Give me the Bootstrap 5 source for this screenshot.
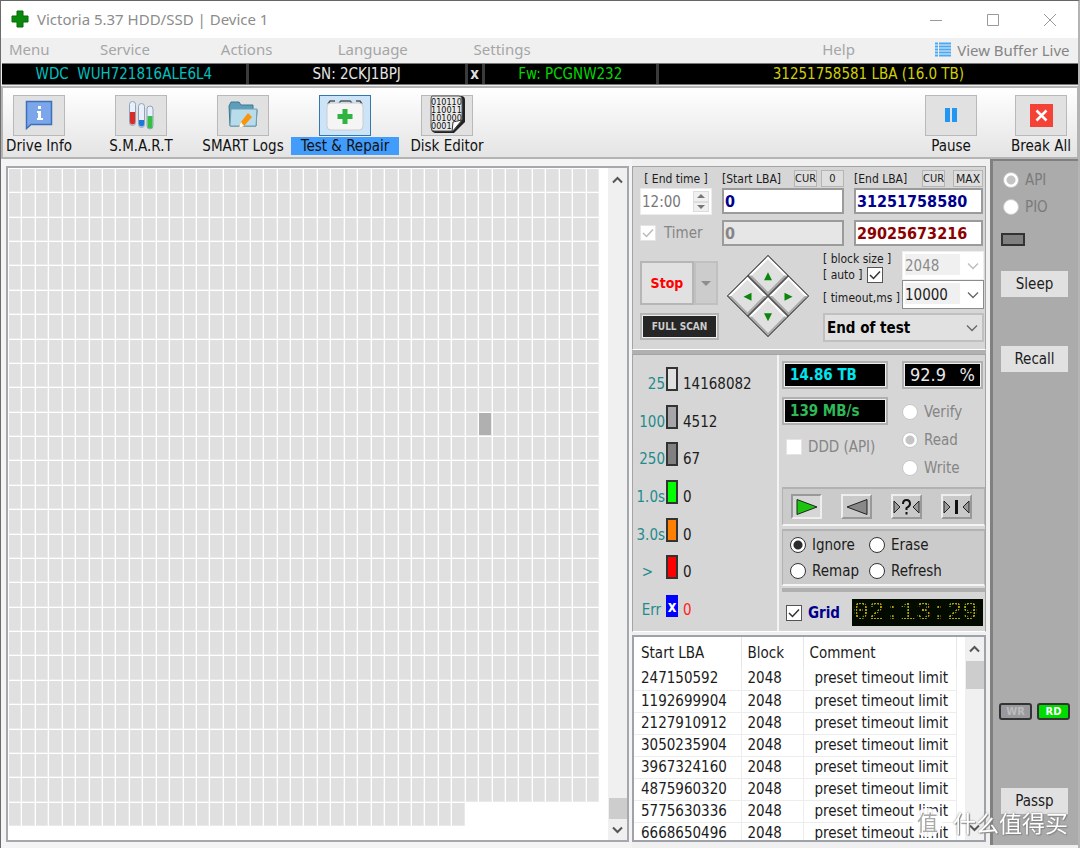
<!DOCTYPE html>
<html lang="en">
<head>
<meta charset="utf-8">
<meta name="viewport" content="width=device-width, initial-scale=1">
<title>Victoria 5.37 HDD/SSD | Device 1</title>
<link href="https://cdn.jsdelivr.net/npm/bootstrap@5.3.0/dist/css/bootstrap.min.css" rel="stylesheet">
<style>
:root{--ui:"DejaVu Sans Condensed","DejaVu Sans",sans-serif;--seg:"Noto Sans","Open Sans",sans-serif;--face:#e1e1e1;--edge:#adadad}
body{font-family:var(--ui);font-size:15px;line-height:20px;color:#1c1c1c;background:#f0f0f0}
button,input,select{font-family:inherit;font-size:inherit;line-height:inherit;color:inherit;border-radius:0;margin:0}
.win{min-height:100vh;border-top:1px solid #666;border-left:1px solid #6c6c6c;border-right:2px solid #b4b4b4}
.titlebar{height:37px;background:#fff;font-family:var(--seg);color:#8c8c8c;padding:0 0 2px 10px}
.winctl button{width:57px;height:36px;border:0;background:none;padding:0}
.menubar{display:grid;grid-template-columns:91fr 121fr 117fr 136fr 349fr 113fr 143fr;height:25px;font-family:var(--seg);padding:0 0 4px 8px;align-items:center}
.menubar a{color:#a6a6a6;text-decoration:none;white-space:nowrap}
.menubar .live{color:#858585;padding-top:2px}
.drivebar{display:grid;grid-template-columns:246fr 218fr 14fr 173fr 423fr;gap:3px;background:#3a3a3a;height:22px;border-top:1px solid #777;border-bottom:1px solid #777;margin-left:1px}
.drivebar>div{background:#000;text-align:center;white-space:pre;line-height:20px;overflow:hidden}
.tools{height:73px;margin-top:1px;padding:4px 10px 0 10px;background:linear-gradient(#fff,#e4e4e4);border:1px solid #b4b4b4;border-width:2px 1px 2px 2px}
.tool{width:52px;border:0;background:none;padding:0;color:#111}
.tool .ico{width:52px;height:41px;background:var(--face);border:1px solid #b9b9b9;display:flex;align-items:center;justify-content:center}
.tool .cap{display:block;width:108px;margin:1px -28px 0;height:18px;line-height:18px;text-align:center;white-space:nowrap}
.tool.on .ico{background:#cce4f7;border-color:#3577ac}
.tool.on .cap{background:#419cfb}
.map{border:2px solid #a5a8ad;background:#fff;min-width:300px}
.cells{display:grid;grid-template-columns:repeat(44,1fr);grid-template-rows:repeat(27,1fr);gap:1px;padding:1px 9px 14px 1px}
.cells i{background:#e0e0e0;border:solid #eaeaea;border-width:0 1px 1px 0}
.cells i.slow{background:#b0b0b0}
.sbar{width:19px;background:#f0f0f0;display:flex;flex-direction:column;align-items:center}
.sbar button{border:0;background:none;padding:0;width:19px;height:24px;line-height:1}
.sbar span{width:18px;background:#cdcdcd}
.mid{width:354px}
.sect{background:#d6d6d6;border:1px solid #a4a4a4;border-bottom-color:#fff}
.fields{display:grid;grid-template-columns:72px 122px 129px;column-gap:10px;padding:3px 1px 0 7px}
.tiny{font-size:12px;line-height:18px;white-space:nowrap}
.chip{border:1px solid #b5b5b5;background:#dedede;font-size:11px;line-height:14px;height:17px;padding:0;text-align:center}
.txt{border:2px solid #9b9b9b;background:#fff;height:26px;width:100%;padding:0 1px;font-weight:bold;font-size:16px;outline:0}
.navy{color:#00008c}.maroon{color:#8b0000}.dim{color:#858585}.teal{color:#1f8c8c}
.spin{background:#fff;height:27px;border:1px solid #ececec}
.spin input{width:50px;border:0;padding:0 1px;background:none;color:#777}
.spin div{width:18px;margin:2px}
.spin button{flex:1;border:1px solid #ddd;background:#f0f0f0;padding:0;line-height:0}
.tick,.dot{appearance:none;flex:none;background-color:#fff;width:16px;height:16px;border:1px solid #555}
.dot{border-radius:50%;border:1px solid #333}
.dot:checked{background:radial-gradient(circle,#2b2b2b 0 4px,#fff 5px)}
.dot:disabled{border:1px solid #c8c8c8}
.dot:disabled:checked{background:radial-gradient(circle,#c4c4c4 0 4px,#fff 5px)}
.tick:checked{background:#fff url("data:image/svg+xml,%3Csvg xmlns='http://www.w3.org/2000/svg' viewBox='0 0 14 14'%3E%3Cpath d='M2 7l3.500 3.500L12 3.500' fill='none' stroke='%23333' stroke-width='1.500'/%3E%3C/svg%3E") center/14px no-repeat}
.tick:disabled{border-color:#e4e4e4;opacity:1}
.tick.faint:checked{background-image:url("data:image/svg+xml,%3Csvg xmlns='http://www.w3.org/2000/svg' viewBox='0 0 14 14'%3E%3Cpath d='M2 7l3.500 3.500L12 3.500' fill='none' stroke='%23bbb' stroke-width='1.500'/%3E%3C/svg%3E")}
.drop{appearance:none;width:100%;height:29px;border:1px solid #8c8c8c;padding:0 2px;background:url("data:image/svg+xml,%3Csvg xmlns='http://www.w3.org/2000/svg' viewBox='0 0 12 12'%3E%3Cpath d='M1 3.500l5 5 5-5' fill='none' stroke='%23666' stroke-width='1.300'/%3E%3C/svg%3E") right 4px center/12px no-repeat,linear-gradient(#f0f0f0,#f0f0f0) 2px 2px/55px 21px no-repeat #fff;opacity:1}
.drop:disabled{border-color:#eee;color:#8a8a8a;opacity:1;background-image:url("data:image/svg+xml,%3Csvg xmlns='http://www.w3.org/2000/svg' viewBox='0 0 12 12'%3E%3Cpath d='M1 3.500l5 5 5-5' fill='none' stroke='%23bbb' stroke-width='1.300'/%3E%3C/svg%3E"),linear-gradient(#f0f0f0,#f0f0f0)}
.drop.wide{background-size:12px,0 0;background-color:var(--face);border:2px solid #c0c0c0;font-weight:bold;color:#000}
.stop{width:54px;height:44px;border:2px solid #b6b6b6;background:var(--face);color:#f00;font-weight:bold;font-size:14px;padding:0}
.more{width:24px;height:44px;border:2px solid #c0c0c0;background:#ccc;padding:0;line-height:0}
.full{height:27px;width:79px;border:2px solid #b5b5b5;outline:1px solid #eee;outline-offset:-3px;background:#262626;color:#ccc;font-size:10px;font-weight:bold;padding:0;white-space:nowrap}
.pad{width:82px;height:82px}
.pad>div{width:58px;height:58px;display:grid;grid-template-columns:1fr 1fr;gap:2px;background:#555;border:1px solid #444;transform:rotate(45deg)}
.pad button{border:2px solid #fff;border-right-color:#aaa;border-bottom-color:#aaa;background:#e0e0e0;padding:0;line-height:0}
.pad svg{transform:rotate(-45deg)}
.opts{width:161px}
.combo{width:82px}
.rail-split{height:4px;background:#b0b0b0}
.stats{width:146px;padding:12px 0 14px;background:#d6d6d6;border-right:2px solid #f4f4f4;display:flex;flex-direction:column;justify-content:space-between}
.stat{display:grid;grid-template-columns:32px 12px 1fr;column-gap:1px;height:24px;align-items:end;line-height:16px}
.stat>span{height:15px}
.stat b{height:24px;border:2px solid #333;font-weight:normal}
.stat>span:first-child{text-align:right}
.stat>span:last-child{padding-left:4px}
.stat .err{border:0;background:#00f;color:#fff;height:22px;line-height:24px;text-align:center;font-weight:bold}
.lcd{background:#000;border:2px solid #b0b0b0;outline:1px solid #eee;outline-offset:-3px;height:28px;line-height:24px;padding:0 6px;font-weight:bold;white-space:nowrap}
.pct{font-weight:normal;font-size:18px;color:#e6e6e6;width:81px}
.green{color:#2fb858}.cyan{color:#00e5ee}
.group{background:#cbcbcb;border:1px solid #b2b2b2;border-width:2px 1px 2px;border-bottom-color:#f4f4f4}
.key{width:31px;height:25px;background:#c9c9c9;border:2px solid #eee;border-right-color:#999;border-bottom-color:#999;padding:0;line-height:0}
.key.down{border-color:#999 #eee #eee #999;background:#d6d6d6}
.modes{display:grid;grid-template-columns:79px 1fr;padding:1px 7px 0;height:57px}
.opt{display:flex;align-items:center;gap:6px;white-space:nowrap}
.clock{position:relative;width:131px;height:27px;background:#030a00;color:#b0a30e;font:26px/27px "Liberation Mono",monospace;padding-left:1px}
.clock::after{content:"";position:absolute;inset:0;background:repeating-linear-gradient(90deg,#030a00 0 1px,transparent 1px 3px),repeating-linear-gradient(#030a00 0 1px,transparent 1px 3px)}
.log{flex:1 1 0;min-height:190px;background:#fff;border:2px solid #9ea2aa;overflow:hidden}
.log table{width:100%;border-collapse:collapse;table-layout:fixed}
.log th{font-weight:normal;height:31px;padding:1px 0 0 6px;border-right:1px solid #e6e6e6}
.log td{height:22px;padding:0 0 0 6px;border-right:1px solid #ededed;border-bottom:1px solid #ededed;line-height:21px;white-space:nowrap}
.log td:last-child{padding-left:11px}
.log tr>:nth-child(1){padding-left:7px}
.side{width:88px;background:#ababab;border:solid #808080;border-width:2px 0 0 3px;padding:9px 8px 31px 6px}
.side .cmd{height:26px;border:0;background:#e1e1e1;width:67px;padding:0}
.lamp{width:24px;height:13px;border:2px solid #333;background:#808080}
.led{width:33px;height:17px;border:2px solid #333;border-radius:3px;font-size:11px;line-height:13px;font-weight:bold;text-align:center}
.wm{position:fixed;right:12px;bottom:9px;color:#fff;font:23px/34px "Noto Sans CJK SC",sans-serif;text-shadow:0 0 2px #777,1px 1px 1px #888;pointer-events:none;gap:11px}
.wm .seal{width:29px;height:29px;line-height:27px;border-radius:50%;background:rgba(255,255,255,.9);color:#aaa;text-shadow:none;text-align:center;font-size:21px}
</style>
</head>
<body>
<div class="win d-flex flex-column">
  <header class="titlebar d-flex align-items-center flex-shrink-0">
    <svg width="18" height="18" viewBox="0 0 18 18"><path d="M6 1h6v5h5v6h-5v5H6v-5H1V6h5z" fill="#0a8a0c" stroke="#056b08"/></svg>
    <span class="ms-2">Victoria 5.37 HDD/SSD | Device 1</span>
    <div class="winctl ms-auto d-flex">
      <button aria-label="Minimize"><svg width="14" height="14"><path d="M1 7.500h12" stroke="#999"/></svg></button>
      <button aria-label="Maximize"><svg width="14" height="14"><path d="M1.500 1.500h11v11h-11z" fill="none" stroke="#999"/></svg></button>
      <button aria-label="Close"><svg width="14" height="14"><path d="M1 1l12 12M13 1L1 13" stroke="#999"/></svg></button>
    </div>
  </header>
  <nav class="menubar flex-shrink-0">
    <a href="#">Menu</a><a href="#">Service</a><a href="#">Actions</a><a href="#">Language</a><a href="#">Settings</a><a href="#">Help</a>
    <a href="#" class="live d-flex align-items-center" style="gap:6px"><svg width="16" height="16"><path d="M4 1.500h12M4 4.500h12M4 7.500h12M4 10.500h12M4 13.500h12M0 1.500h3M0 4.500h3M0 7.500h3M0 10.500h3M0 13.500h3" stroke="#4aa8f5" stroke-width="2"/></svg>View Buffer Live</a>
  </nav>
  <div class="drivebar flex-shrink-0">
    <div style="color:#00c0c0">WDC  WUH721816ALE6L4</div><div style="color:#e4e4e4">SN: 2CKJ1BPJ</div><div style="color:#ddd;font-weight:bold">x</div><div style="color:#00d800">Fw: PCGNW232</div><div style="color:#d0d000">31251758581 LBA (16.0 TB)</div>
  </div>
  <div class="tools d-flex flex-shrink-0">
    <div class="d-flex" style="gap:50px">
      <button class="tool"><span class="ico"><svg width="28" height="30" viewBox="0 0 28 30"><path d="M1.500 1.500h25v23H6l-4.500 4z" fill="#7ba7ea" stroke="#3e6fba" stroke-width="1.500"/><path d="M13 6h3v3h-3zM12 11h4v7h2v2h-6v-2h1v-5h-1z" fill="#fff"/></svg></span><span class="cap">Drive Info</span></button>
      <button class="tool"><span class="ico"><svg width="26" height="30" viewBox="0 0 26 30"><g stroke="#8fa3bd" fill="#e8f1fb"><rect x="1.500" y="1.500" width="6" height="24" rx="3"/><rect x="10.500" y="3.500" width="6" height="24" rx="3"/><rect x="19" y="6" width="6" height="23" rx="3"/></g><path d="M2 12h5v10a2.500 2.500 0 0 1-5 0z" fill="#dc2a24"/><path d="M11 20h5v4a2.500 2.500 0 0 1-5 0z" fill="#1c77d8"/><path d="M19.500 16h5v10a2.500 2.500 0 0 1-5 0z" fill="#35bf45"/></svg></span><span class="cap">S.M.A.R.T</span></button>
      <button class="tool"><span class="ico"><svg width="30" height="28" viewBox="0 0 30 28"><path d="M1 5l2-4h8l2 3h12v5h4l-1 16H2z" fill="#5d9fba" stroke="#39788f"/><path d="M3 8h26l-1 17H2z" fill="#b9dcea" stroke="#6c9fb2"/><path d="M20 12l4 4-8 9-5 2 2-6z" fill="#fb940d"/><path d="M13 21l3 4-5 2z" fill="#fff"/></svg></span><span class="cap">SMART Logs</span></button>
      <button class="tool on"><span class="ico"><svg width="40" height="32" viewBox="0 0 40 32"><path d="M3 5l2-3h5M14 4l2-2h9l2 2M31 2h4l2 3" fill="none" stroke="#555" stroke-width="1.500"/><rect x="2" y="4" width="36" height="27" rx="4" fill="#f5f5f5" stroke="#ccc"/><path d="M17.500 10h5v5h5v5h-5v5h-5v-5h-5v-5h5z" fill="#2eb43f"/></svg></span><span class="cap">Test &amp; Repair</span></button>
      <button class="tool"><span class="ico"><svg width="38" height="40" viewBox="0 0 38 40"><path d="M4 1h29q4 0 4 4v22L26 38H7q-4-1-4-5z" fill="#222"/><path d="M4 1h27q3 0 3 4v20l-9 11H6q-3 0-3-4V5q0-4 1-4z" fill="#e9e9e9" stroke="#555"/><g font-family="DejaVu Sans Condensed" font-size="9" fill="#111"><text x="3" y="10">010110</text><text x="3" y="18">110011</text><text x="3" y="26">101000</text><text x="3" y="34">0001</text></g><path d="M24 37l1-10 9-2z" fill="#fff" stroke="#333"/></svg></span><span class="cap">Disk Editor</span></button>
    </div>
    <div class="ms-auto d-flex" style="gap:38px">
      <button class="tool"><span class="ico"><svg width="14" height="14"><path d="M1 0h5v14H1zM8 0h5v14H8z" fill="#2196f3"/></svg></span><span class="cap">Pause</span></button>
      <button class="tool"><span class="ico"><svg width="23" height="23"><path d="M0 0h23v23H0z" fill="#f44336"/><path d="M6.500 6.500l10 10M16.500 6.500l-10 10" stroke="#fff" stroke-width="2.500"/></svg></span><span class="cap">Break All</span></button>
    </div>
  </div>

  <main class="d-flex flex-grow-1">
    <div class="d-flex flex-grow-1" style="padding:7px 3px 6px 5px;background:#f4f4f4">
      <section class="map d-flex flex-grow-1" aria-label="Surface map">
        <div class="cells flex-grow-1" id="cells"></div>
        <div class="sbar"><button aria-label="Up"><svg width="11" height="8"><path d="M1 6.500l4.500-4.500L10 6.500" fill="none" stroke="#555" stroke-width="2"/></svg></button><span class="mt-auto" style="height:21px"></span><button style="height:21px" aria-label="Down"><svg width="11" height="8"><path d="M1 1.500L5.500 6 10 1.500" fill="none" stroke="#555" stroke-width="2"/></svg></button></div>
      </section>
    </div>

    <div class="mid d-flex flex-column flex-shrink-0" style="margin:7px 4px 6px 0">
      <section class="sect" style="height:184px">
        <div class="fields">
          <label class="tiny text-center" for="endtime">[ End time ]</label>
          <div class="d-flex tiny"><label for="slba">[Start LBA]</label><button class="chip ms-auto" style="width:23px">CUR</button><button class="chip ms-1" style="width:23px">0</button></div>
          <div class="d-flex tiny"><label for="elba">[End LBA]</label><button class="chip ms-auto" style="width:23px">CUR</button><button class="chip ms-2" style="width:30px;font-size:12px">MAX</button></div>
          <div class="spin d-flex mt-0"><input id="endtime" value="12:00" disabled><div class="d-flex flex-column"><button aria-label="Later"><svg width="8" height="4"><path d="M0 4l4-4 4 4z" fill="#777"/></svg></button><button aria-label="Earlier"><svg width="8" height="4"><path d="M0 0l4 4 4-4z" fill="#777"/></svg></button></div></div>
          <input class="txt navy" id="slba" value="0"><input class="txt navy" id="elba" value="31251758580">
          <label class="d-flex align-items-center dim" style="gap:8px;margin-top:5px"><input class="tick faint" type="checkbox" checked disabled>Timer</label>
          <input class="txt dim" aria-label="Current start" value="0" style="margin-top:5px;background:#e6e6e6"><input class="txt maroon" aria-label="Current LBA" value="29025673216" style="margin-top:5px">
        </div>
        <div class="d-flex" style="padding:5px 1px 0 7px">
          <div style="padding-top:10px"><div class="d-flex"><button class="stop">Stop</button><button class="more" aria-label="More"><svg width="10" height="5"><path d="M0 0l5 5 5-5z" fill="#8e8e8e"/></svg></button></div><button class="full mt-2">FULL SCAN</button></div>
          <div class="pad d-flex align-items-center justify-content-center" style="margin:4px 13px 0 8px"><div>
            <button aria-label="Up"><svg width="10" height="10"><path d="M1 9l4-8 4 8z" fill="#0a860a"/></svg></button><button aria-label="Right"><svg width="10" height="10"><path d="M1 1l8 4-8 4z" fill="#0a860a"/></svg></button>
            <button aria-label="Left"><svg width="10" height="10"><path d="M9 1L1 5l8 4z" fill="#0a860a"/></svg></button><button aria-label="Down"><svg width="10" height="10"><path d="M1 1l4 8 4-8z" fill="#0a860a"/></svg></button></div></div>
          <div class="opts ms-auto">
            <div class="d-flex">
              <div class="tiny flex-grow-1" style="width:79px;line-height:16px"><label class="d-block" for="bs">[ block size ]</label><label class="d-flex align-items-center">[ auto ]<input class="tick ms-1" type="checkbox" checked></label><label class="d-block" for="to" style="padding-top:7px">[ timeout,ms ]</label></div>
              <div class="combo"><select class="drop" id="bs" disabled><option>2048</option></select><select class="drop" id="to"><option>10000</option></select></div>
            </div>
            <select class="drop wide mt-1" aria-label="After scan"><option>End of test</option></select>
          </div>
        </div>
      </section>
      <div class="rail-split"></div>
      <section class="d-flex sect" style="height:278px">
        <div class="stats">
          <div class="stat"><span class="teal">25</span><b style="background:#e0e0e0"></b><span>14168082</span></div>
          <div class="stat"><span class="teal">100</span><b style="background:#a5a5aa"></b><span>4512</span></div>
          <div class="stat"><span class="teal">250</span><b style="background:#808080"></b><span>67</span></div>
          <div class="stat"><span class="teal">1.0s</span><b style="background:#0f0"></b><span>0</span></div>
          <div class="stat"><span class="teal">3.0s</span><b style="background:#ff8000"></b><span>0</span></div>
          <div class="stat"><span class="teal pe-2 me-1">&gt;</span><b style="background:#f00"></b><span>0</span></div>
          <div class="stat"><span class="teal pe-1">Err</span><b class="err">x</b><span style="color:#f22">0</span></div>
        </div>
        <div class="flex-grow-1" style="padding:6px 0 0 3px">
          <div class="d-flex justify-content-between" style="padding-right:2px">
            <div style="width:106px"><div class="lcd cyan">14.86 TB</div><div class="lcd green mt-2">139 MB/s</div>
              <label class="opt dim" style="margin:12px 0 0 4px"><input class="tick" type="checkbox" disabled>DDD (API)</label></div>
            <div><div class="lcd pct d-flex justify-content-between">92.9 <span>%</span></div>
              <div class="dim d-flex flex-column gap-2" style="margin-top:13px">
                <label class="opt"><input class="dot" type="radio" name="op" disabled>Verify</label><label class="opt"><input class="dot" type="radio" name="op" checked disabled>Read</label><label class="opt"><input class="dot" type="radio" name="op" disabled>Write</label></div></div>
          </div>
          <div class="group d-flex justify-content-between align-items-center" style="height:39px;padding:0 12px 0 8px;margin-top:9px">
            <button class="key down" aria-label="Forward"><svg width="24" height="18"><path d="M2 1.500L22 9 2 16.500z" fill="#1bc50e" stroke="#222"/></svg></button>
            <button class="key" aria-label="Backward"><svg width="24" height="18"><path d="M22 1.500L2 9l20 7.500z" fill="#888" stroke="#222"/></svg></button>
            <button class="key" aria-label="Random"><svg width="27" height="20"><path d="M1 4l6 6-6 6zM26 4l-6 6 6 6z" fill="#999" stroke="#222"/><path d="M10 7q0-4 3.500-4t3.500 4q0 2-3.500 4v2M13.500 15v2.500" fill="none" stroke="#111" stroke-width="2"/></svg></button>
            <button class="key" aria-label="Butterfly"><svg width="27" height="20"><path d="M1 4l6 6-6 6zM26 4l-6 6 6 6z" fill="#999" stroke="#222"/><path d="M13.500 3v14" stroke="#111" stroke-width="3"/></svg></button>
          </div>
          <div class="group modes" style="margin-top:3px">
            <label class="opt"><input class="dot" type="radio" name="act" checked>Ignore</label><label class="opt"><input class="dot" type="radio" name="act">Erase</label><label class="opt"><input class="dot" type="radio" name="act">Remap</label><label class="opt"><input class="dot" type="radio" name="act">Refresh</label>
          </div>
          <div class="rail-split" style="margin-top:2px"></div>
          <div class="d-flex align-items-center" style="padding:7px 2px 0 4px"><label class="opt fw-bold navy"><input class="tick" type="checkbox" checked>Grid</label><div class="clock ms-auto">02:13:29</div></div>
        </div>
      </section>
      <section class="log d-flex" style="margin-top:3px">
        <div class="flex-grow-1"><table><colgroup><col style="width:107px"><col style="width:62px"><col></colgroup>
          <thead><tr><th>Start LBA</th><th>Block</th><th>Comment</th></tr></thead>
          <tbody>
            <tr><td>247150592</td><td>2048</td><td>preset timeout limit</td></tr><tr><td>1192699904</td><td>2048</td><td>preset timeout limit</td></tr>
            <tr><td>2127910912</td><td>2048</td><td>preset timeout limit</td></tr><tr><td>3050235904</td><td>2048</td><td>preset timeout limit</td></tr>
            <tr><td>3967324160</td><td>2048</td><td>preset timeout limit</td></tr><tr><td>4875960320</td><td>2048</td><td>preset timeout limit</td></tr>
            <tr><td>5775630336</td><td>2048</td><td>preset timeout limit</td></tr><tr><td>6668650496</td><td>2048</td><td>preset timeout limit</td></tr>
          </tbody></table></div>
        <div class="sbar ms-2"><button aria-label="Up"><svg width="11" height="8"><path d="M1 6.500l4.500-4.500L10 6.500" fill="none" stroke="#555" stroke-width="2"/></svg></button><span style="height:28px"></span><button class="mt-auto" aria-label="Down"><svg width="11" height="8"><path d="M1 1.500L5.500 6 10 1.500" fill="none" stroke="#555" stroke-width="2"/></svg></button></div>
      </section>
    </div>

    <aside class="side d-flex flex-column flex-shrink-0" style="margin-bottom:3px">
      <label class="opt" style="color:#7b7b7b;padding-left:4px"><input class="dot" type="radio" name="io" checked disabled>API</label>
      <label class="opt" style="color:#7b7b7b;padding-left:4px;margin-top:7px"><input class="dot" type="radio" name="io" disabled>PIO</label>
      <div class="lamp" style="margin:16px 0 0 2px"></div>
      <button class="cmd" style="margin:25px 0 0 2px">Sleep</button>
      <button class="cmd" style="margin:49px 0 0 2px">Recall</button>
      <div class="d-flex justify-content-between mt-auto"><span class="led" style="background:#9a9a9e;color:#bcbcbc">WR</span><span class="led" style="background:#00dc00;color:#fff">RD</span></div>
      <button class="cmd" style="margin:68px 0 0 2px">Passp</button>
    </aside>
  </main>
</div>
<div class="wm d-flex align-items-center"><span class="seal">值</span><span>什么值得买</span></div>
<script>
// Surface map: 26 full rows of 44 blocks, then a partly scanned one.
const COLS = 44, DONE = 26 * COLS + 34, SLOW = 10 * COLS + 35;
const map = document.getElementById('cells');
for (let n = 0; n < DONE; n++) {
  const block = document.createElement('i');
  if (n === SLOW) block.className = 'slow';
  map.append(block);
}
</script>
<script src="https://cdn.jsdelivr.net/npm/bootstrap@5.3.0/dist/js/bootstrap.bundle.min.js"></script>
</body>
</html>
